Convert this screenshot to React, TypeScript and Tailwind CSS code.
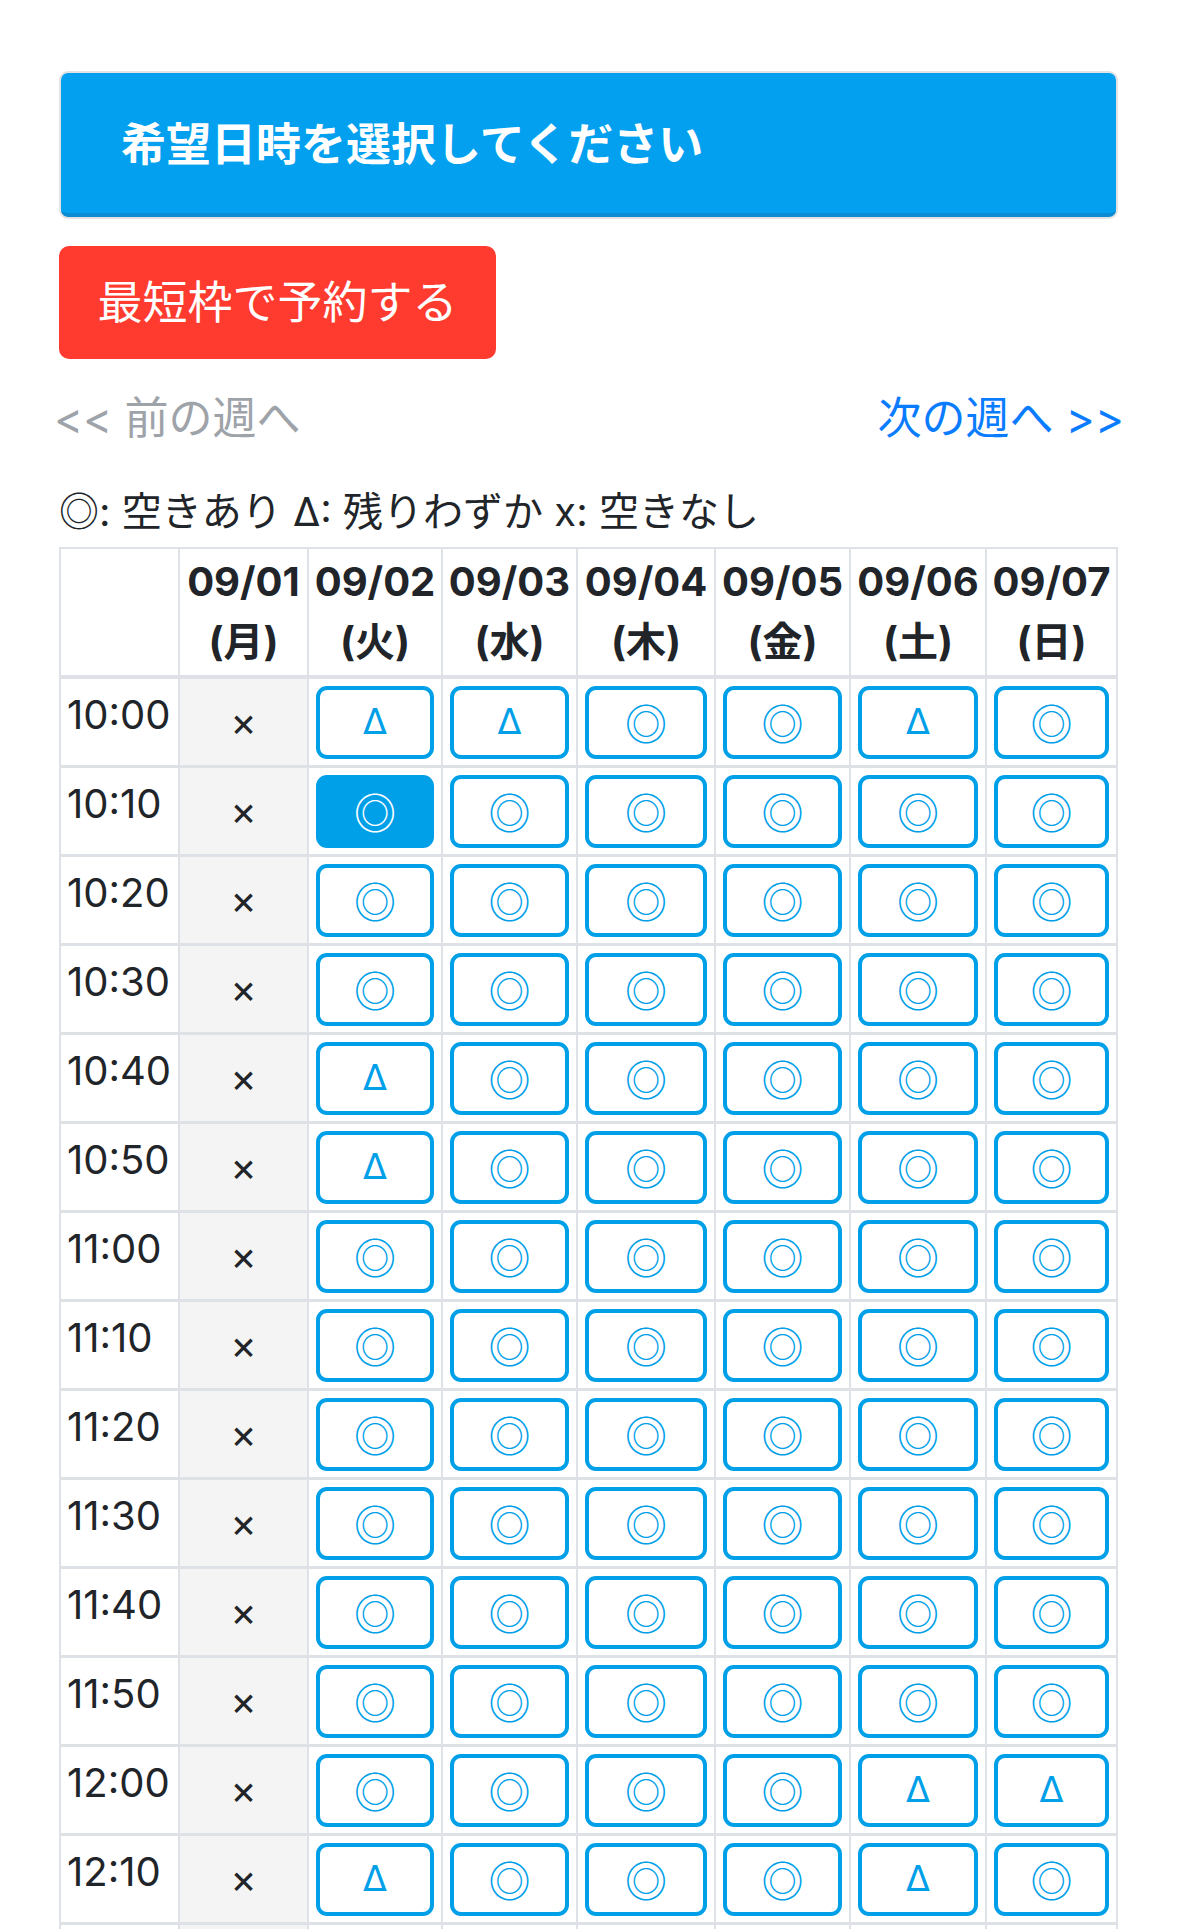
import React, { useState } from 'react'

const days = [
  { date: '09/01', dow: '月' },
  { date: '09/02', dow: '火' },
  { date: '09/03', dow: '水' },
  { date: '09/04', dow: '木' },
  { date: '09/05', dow: '金' },
  { date: '09/06', dow: '土' },
  { date: '09/07', dow: '日' },
]

// o: 空きあり, t: 残りわずか (09/02〜09/07)
const rows = [
  { time: '10:00', slots: 'ttooto' },
  { time: '10:10', slots: 'oooooo' },
  { time: '10:20', slots: 'oooooo' },
  { time: '10:30', slots: 'oooooo' },
  { time: '10:40', slots: 'tooooo' },
  { time: '10:50', slots: 'tooooo' },
  { time: '11:00', slots: 'oooooo' },
  { time: '11:10', slots: 'oooooo' },
  { time: '11:20', slots: 'oooooo' },
  { time: '11:30', slots: 'oooooo' },
  { time: '11:40', slots: 'oooooo' },
  { time: '11:50', slots: 'oooooo' },
  { time: '12:00', slots: 'oooott' },
  { time: '12:10', slots: 'toooto' },
  { time: '12:20', slots: 'oooooo' },
  { time: '12:30', slots: 'oooooo' },
]

const gridCols = 'grid grid-cols-[119px_129px_134px_135px_138px_135px_136px_131px]'

const SlotButton: React.FC<{ kind: string; selected: boolean; onClick: () => void }> = ({
  kind,
  selected,
  onClick,
}) => (
  <button
    type="button"
    onClick={onClick}
    className={
      selected
        ? 'w-full h-[73px] rounded-[11px] border-[4px] border-[#00a0e9] bg-[#00a0e9] text-white flex items-center justify-center'
        : 'w-full h-[73px] rounded-[11px] border-[4px] border-[#00a0e9] bg-white text-[#00a0e9] flex items-center justify-center'
    }
  >
    {kind === 't' ? (
      <span className="font-['DejaVu_Sans',sans-serif] text-[35px] leading-none">Δ</span>
    ) : (
      <span className="font-['Noto_Sans_CJK_JP',sans-serif] text-[42px] leading-none">◎</span>
    )}
  </button>
)

export default function App() {
  const [selected, setSelected] = useState('10:10-0')

  return (
    <div className="min-h-screen bg-white font-[Inter,'Noto_Sans_CJK_JP',sans-serif] text-[#212529]">
      <div className="mx-auto w-[1179px] pl-[59px] pr-[61px] pt-[71px] pb-10">
        <div className="h-[148px] rounded-[9px] border-2 border-[#e3e3e3]">
          <div className="h-full rounded-[7px] bg-[#02a0ee] border-b-4 border-[#0a8bd2] flex items-center pl-[60px] pt-[2px]">
            <h1 className="text-[45px] font-bold text-white leading-none">希望日時を選択してください</h1>
          </div>
        </div>

        <button
          type="button"
          className="mt-[27px] h-[113px] w-[437px] rounded-[10px] bg-[#ff3b30] text-white text-[45px] leading-none flex items-center justify-center"
        >
          最短枠で予約する
        </button>

        <div className="mt-[26px] -ml-[5px] -mr-[6px] flex justify-between text-[44px] leading-[66px]">
          <span className="text-[#9ea3a9]">&lt;&lt; 前の週へ</span>
          <span className="text-[#0a7cff]">次の週へ &gt;&gt;</span>
        </div>

        <p className="mt-[32px] text-[40px] leading-[58px]">◎: 空きあり Δ: 残りわずか x: 空きなし</p>

        <div className="mt-[6px] border-t-2 border-l-2 border-[#dee2e6]">
          <div className={`${gridCols} h-[130px] border-b-4 border-[#dee2e6]`}>
            <div className="border-r-2 border-[#dee2e6]" />
            {days.map((d) => (
              <div
                key={d.date}
                className="border-r-2 border-[#dee2e6] flex flex-col items-center justify-center text-[40px] leading-[60px] font-bold"
              >
                <span>{d.date}</span>
                <span>({d.dow})</span>
              </div>
            ))}
          </div>

          {rows.map((r) => (
            <div key={r.time} className={`${gridCols} h-[89px] border-b-[3px] border-[#dee2e6]`}>
              <div className="border-r-2 border-[#dee2e6] pl-[6px] pt-[6px] text-[40px] leading-[60px]">
                {r.time}
              </div>
              <div className="border-r-2 border-[#dee2e6] bg-[#f4f4f4] flex items-center justify-center text-[40px] leading-none">
                ×
              </div>
              {r.slots.split('').map((s, i) => {
                const id = `${r.time}-${i}`
                return (
                  <div key={id} className="border-r-2 border-[#dee2e6] flex items-center justify-center px-[7px]">
                    <SlotButton kind={s} selected={selected === id} onClick={() => setSelected(id)} />
                  </div>
                )
              })}
            </div>
          ))}
        </div>
      </div>
    </div>
  )
}
